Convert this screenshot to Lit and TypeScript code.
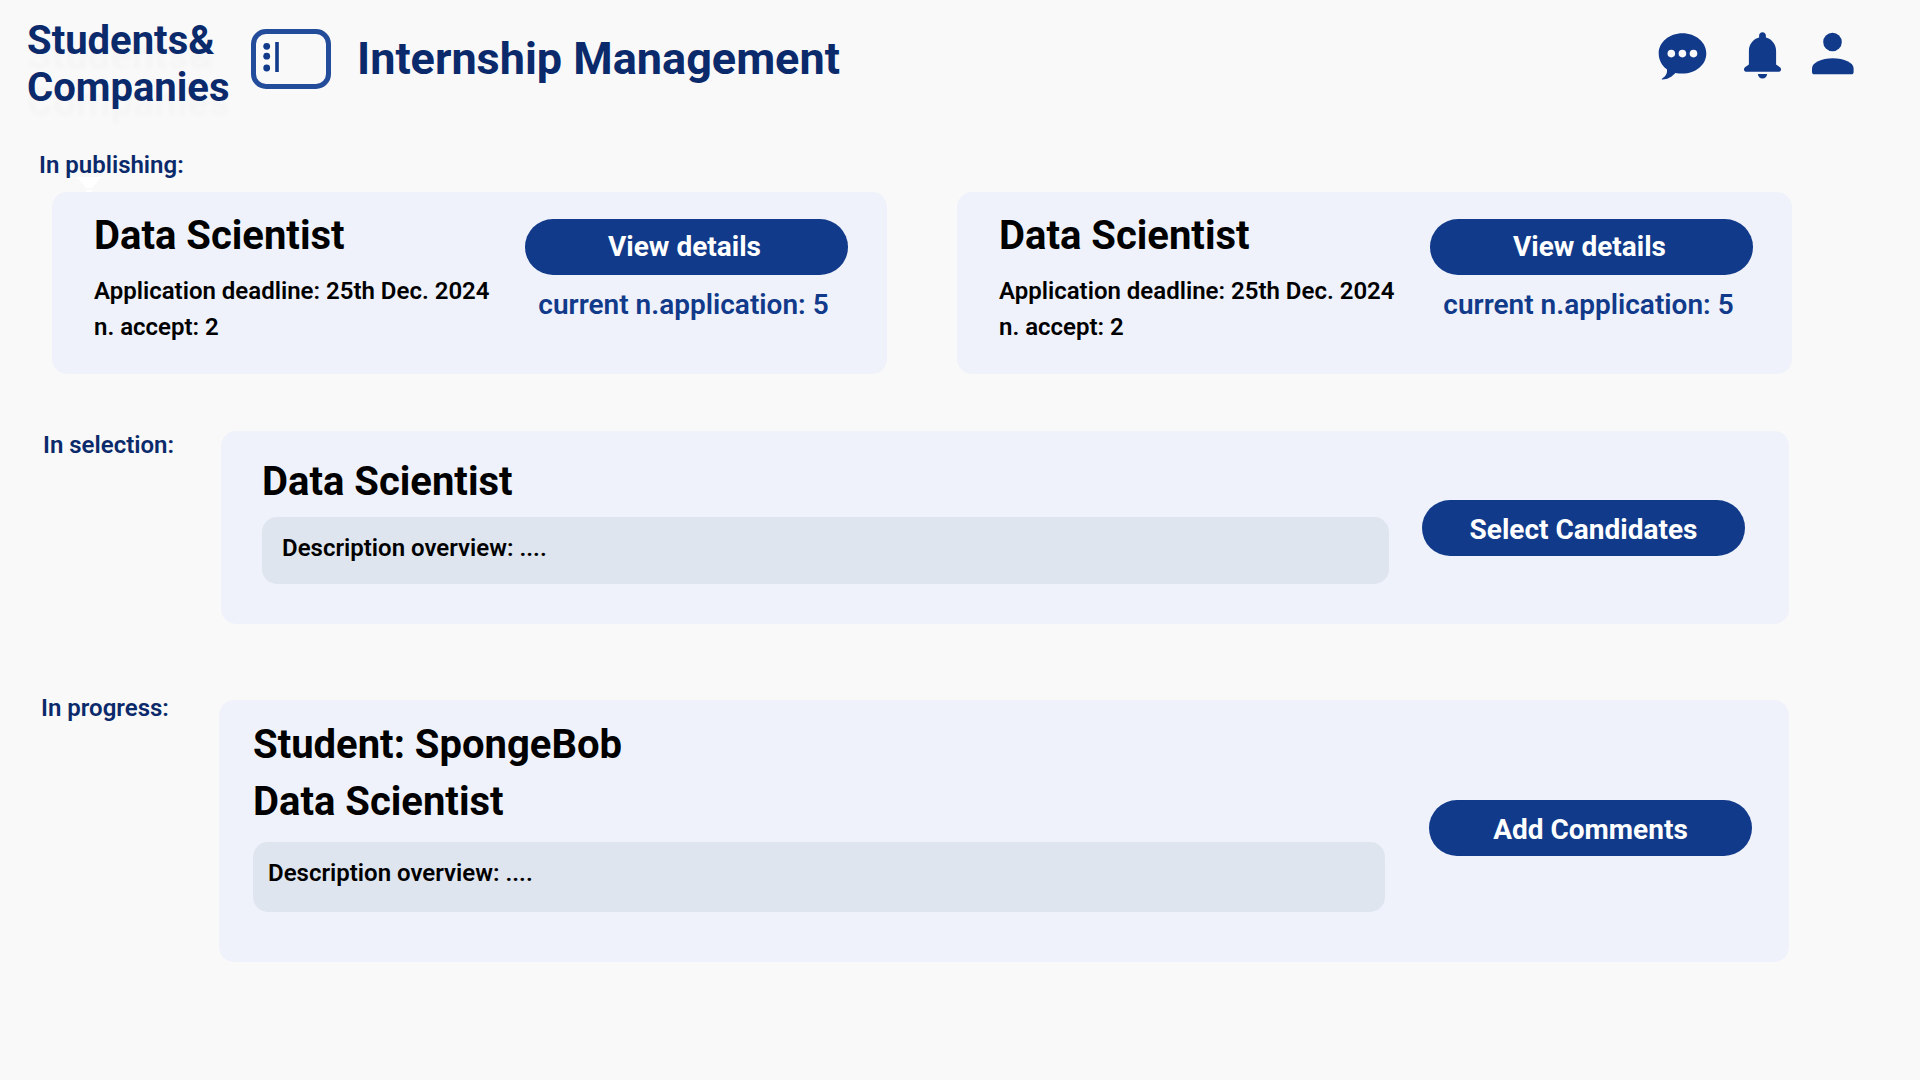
import { LitElement, html, css } from "lit";
import { customElement, property } from "lit/decorators.js";

const shared = css`
  * {
    box-sizing: border-box;
    margin: 0;
  }
  button {
    border: 0;
    padding: 0;
    font: inherit;
    color: inherit;
    background: none;
    cursor: pointer;
  }
  .pill {
    flex: none;
    width: 323px;
    height: 56px;
    border-radius: 28px;
    background: #113a8a;
    color: #fff;
    font-size: 28px;
    line-height: 32px;
    font-weight: 700;
  }
  .title {
    font-size: 40px;
    line-height: 47px;
    font-weight: 700;
    color: #000;
  }
`;

@customElement("app-header")
export class AppHeader extends LitElement {
  static styles = [
    shared,
    css`
      :host {
        display: block;
      }
      .bar {
        display: flex;
        align-items: flex-start;
        padding: 17px 66px 0 27px;
      }
      .brand {
        width: 224px;
        color: #0b2a6b;
        font-size: 40px;
        line-height: 47px;
        font-weight: 700;
        text-shadow: 0 15px 4px rgba(0, 0, 0, 0.02);
      }
      .menu {
        margin-top: 12px;
        height: 60px;
      }
      .menu svg,
      .tool svg {
        display: block;
      }
      .heading {
        flex: 1;
        margin: 15px 0 0 26px;
        color: #0b2a6b;
        font-size: 45px;
        line-height: 53px;
        font-weight: 700;
      }
      .tools {
        display: flex;
        gap: 29px;
        margin-top: 14px;
      }
    `,
  ];

  render() {
    return html`
      <header class="bar">
        <div class="brand">Students&amp;<br />Companies</div>
        <button class="menu" aria-label="Menu">
          <svg width="80" height="60" viewBox="0 0 80 60">
            <rect x="2.5" y="2.5" width="75" height="55" rx="12.5" fill="none" stroke="#234c9a" stroke-width="5" />
            <g fill="#113a8a">
              <circle cx="15.7" cy="17.3" r="3.4" />
              <circle cx="15.7" cy="27.2" r="3.4" />
              <circle cx="15.7" cy="39" r="3.4" />
              <rect x="24.2" y="13" width="3.6" height="30" />
            </g>
          </svg>
        </button>
        <h1 class="heading">Internship Management</h1>
        <nav class="tools">
          <button class="tool" aria-label="Messages">
            <svg width="57" height="50" viewBox="0 0 57 50" fill="#113a8a">
              <path
                d="M25.500 2.200C38.700 2.200 49.300 11.200 49.300 22.400S38.700 42.600 25.500 42.600C23 42.600 20.600 42.500 18.400 41.900C15 45.600 10.500 48.500 5.300 48.400C4.500 48.400 4.700 47.700 5.300 47.400C8.600 45.300 10.600 42.500 9.900 38.300C4.900 34.500 1.700 28.800 1.700 22.400C1.700 11.200 12.300 2.200 25.500 2.200Z"
              />
              <g fill="#f9f9f9">
                <circle cx="14.300" cy="22.600" r="3.800" />
                <circle cx="25.400" cy="22.600" r="3.800" />
                <circle cx="36.500" cy="22.600" r="3.800" />
              </g>
            </svg>
          </button>
          <button class="tool" aria-label="Notifications">
            <svg width="40" height="50" viewBox="0 0 40 50" fill="#113a8a">
              <path
                d="M19.500 1.300C21.500 1.300 22.900 2.700 22.900 4.700V6.500C29 8.100 33.100 13.500 33.100 20V33.600L37 36.300C38.700 37.700 38.200 40.700 36 40.700H3C.8 40.700 .3 37.700 2 36.300L5.900 33.600V20C5.900 13.500 10 8.100 16.100 6.500V4.700C16.100 2.700 17.500 1.300 19.500 1.300Z"
              />
              <path d="M14.900 42.900H24.100C24.100 45.500 22 47.400 19.500 47.400S14.900 45.500 14.900 42.900Z" />
            </svg>
          </button>
          <button class="tool" aria-label="Profile">
            <svg width="42" height="50" viewBox="0 0 42 50" fill="#113a8a">
              <circle cx="20.500" cy="11" r="9.300" />
              <path
                d="M0 37.400C0 31.500 9.500 27.200 20.800 27.200S41.600 31.500 41.600 37.400V41C41.600 42.600 40.700 43.300 39.300 43.300H2.300C.9 43.300 0 42.600 0 41Z"
              />
            </svg>
          </button>
        </nav>
      </header>
    `;
  }
}

@customElement("publishing-card")
export class PublishingCard extends LitElement {
  @property() name = "";
  @property() deadline = "";
  @property({ type: Number }) accept = 0;
  @property({ type: Number }) applications = 0;

  static styles = [
    shared,
    css`
      :host {
        display: block;
        flex: 1;
      }
      .card {
        display: flex;
        justify-content: space-between;
        padding: 20px 39px 29px 42px;
        border-radius: 15px;
        background: #eff2fa;
      }
      .facts {
        margin-top: 14px;
        font-size: 24px;
        line-height: 36px;
        font-weight: 600;
        color: #000;
        white-space: nowrap;
      }
      .side {
        padding-top: 7px;
      }
      .pill {
        padding-right: 4px;
      }
      .count {
        margin-top: 14px;
        padding-right: 6px;
        font-size: 28px;
        line-height: 32px;
        font-weight: 600;
        color: #113a8a;
        text-align: center;
        white-space: nowrap;
      }
    `,
  ];

  render() {
    return html`
      <article class="card">
        <div>
          <h3 class="title">${this.name}</h3>
          <div class="facts">
            <p>Application deadline: ${this.deadline}</p>
            <p>n. accept: ${this.accept}</p>
          </div>
        </div>
        <div class="side">
          <button class="pill">View details</button>
          <p class="count">current n.application: ${this.applications}</p>
        </div>
      </article>
    `;
  }
}

@customElement("app-root")
export class AppRoot extends LitElement {
  static styles = [
    shared,
    css`
      :host {
        display: block;
        min-height: 100vh;
        background: #f9f9f9;
        font-family: Roboto, "Liberation Sans", sans-serif;
      }
      .label {
        color: #0b2a6b;
        font-size: 24px;
        line-height: 28px;
        font-weight: 600;
      }
      .publishing {
        padding: 40px 128px 0 39px;
      }
      .filter {
        display: block;
        margin: -2px 0 0 38px;
      }
      .cards {
        display: flex;
        gap: 70px;
        padding-left: 13px;
      }
      .row {
        display: flex;
        align-items: flex-start;
        padding-right: 131px;
      }
      .selection {
        margin-top: 57px;
        padding-left: 43px;
      }
      .progress {
        margin-top: 70px;
        padding-left: 41px;
      }
      .row .label {
        width: 178px;
      }
      .row .pill {
        padding-top: 4px;
      }
      .panel {
        flex: 1;
        display: flex;
        align-items: center;
        border-radius: 15px;
        background: #eff2fa;
      }
      .selection .panel {
        gap: 33px;
        padding: 0 44px 0 41px;
      }
      .progress .panel {
        gap: 44px;
        margin-top: 6px;
        padding: 0 37px 6px 34px;
      }
      .main {
        flex: 1;
        padding: 27px 0 40px;
      }
      .progress .main {
        padding: 21px 0 44px;
      }
      .overview {
        margin-top: 12px;
        padding: 17px 20px 22px;
        border-radius: 15px;
        background: #dee5ef;
        color: #000;
        font-size: 24px;
        line-height: 28px;
        font-weight: 600;
      }
      .progress .title + .title {
        margin-top: 10px;
      }
      .progress .overview {
        margin-top: 17px;
        padding: 17px 15px 25px;
      }
    `,
  ];

  render() {
    return html`
      <app-header></app-header>
      <main>
        <section class="publishing">
          <h2 class="label">In publishing:</h2>
          <svg class="filter" width="24" height="15" viewBox="0 0 24 15" fill="#fff" aria-hidden="true">
            <path d="M0 0H24L15 11H9Z" />
            <path d="M9 13H15V15H9Z" />
          </svg>
          <div class="cards">
            <publishing-card name="Data Scientist" deadline="25th Dec. 2024" accept="2" applications="5"></publishing-card>
            <publishing-card name="Data Scientist" deadline="25th Dec. 2024" accept="2" applications="5"></publishing-card>
          </div>
        </section>
        <section class="row selection">
          <h2 class="label">In selection:</h2>
          <article class="panel">
            <div class="main">
              <h3 class="title">Data Scientist</h3>
              <p class="overview">Description overview: ....</p>
            </div>
            <button class="pill">Select Candidates</button>
          </article>
        </section>
        <section class="row progress">
          <h2 class="label">In progress:</h2>
          <article class="panel">
            <div class="main">
              <h3 class="title">Student: SpongeBob</h3>
              <h3 class="title">Data Scientist</h3>
              <p class="overview">Description overview: ....</p>
            </div>
            <button class="pill">Add Comments</button>
          </article>
        </section>
      </main>
    `;
  }
}
